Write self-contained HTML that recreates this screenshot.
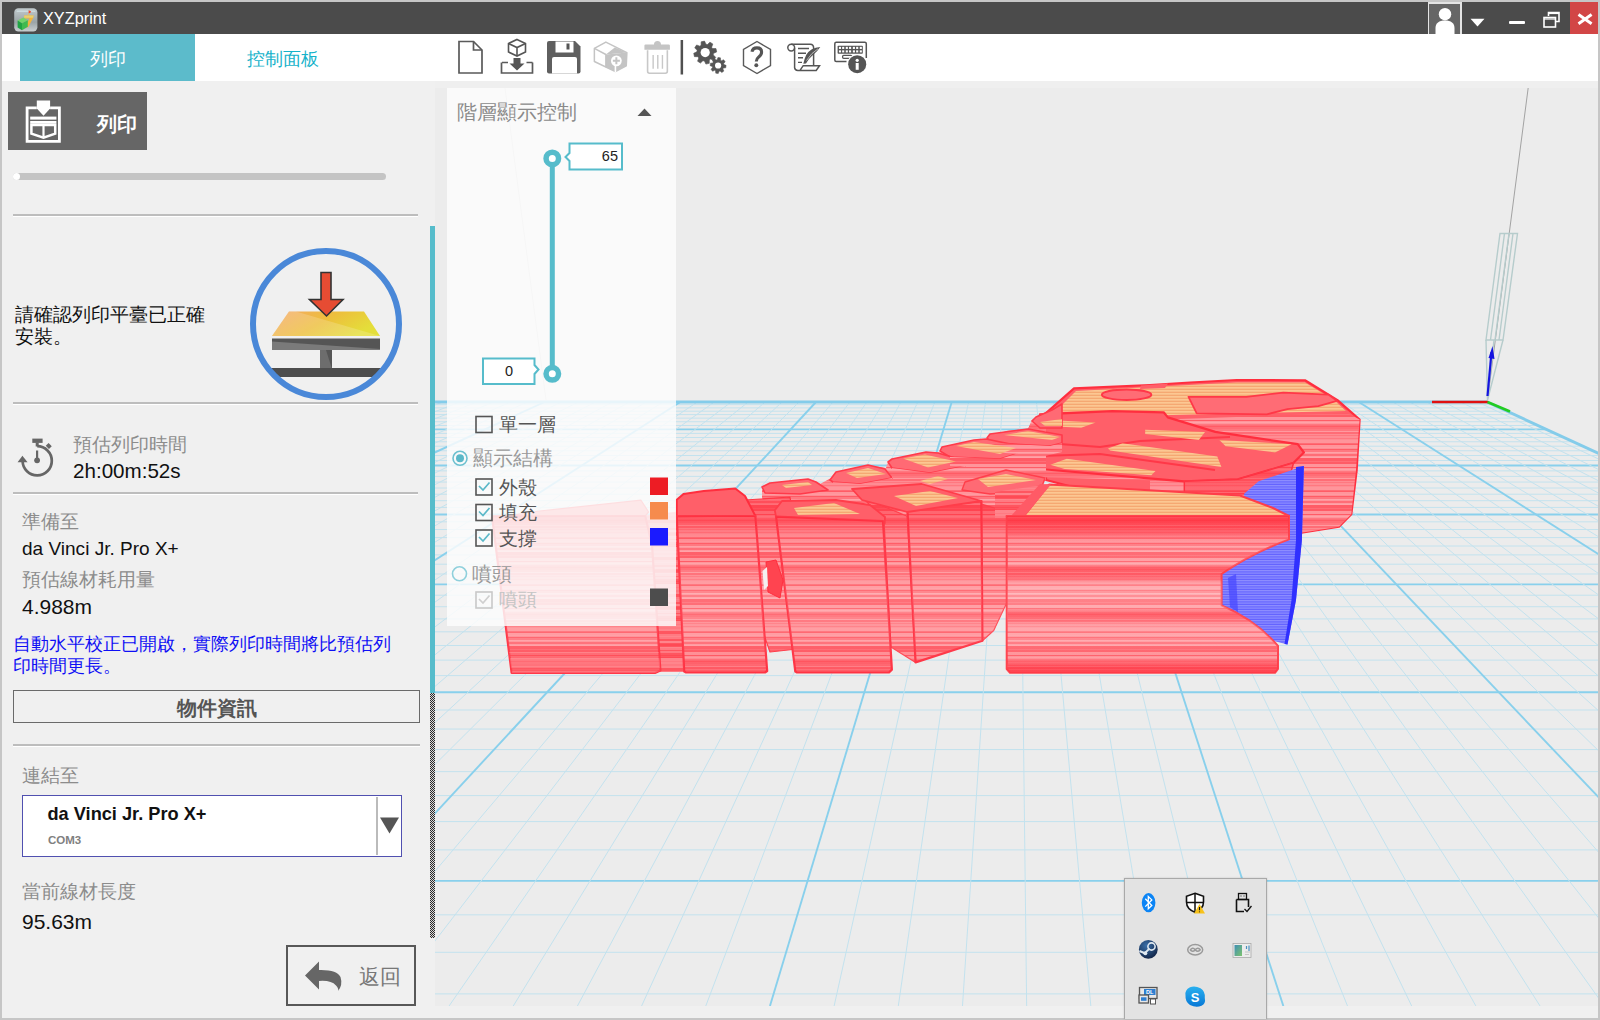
<!DOCTYPE html>
<html><head><meta charset="utf-8">
<style>
*{box-sizing:border-box;margin:0;padding:0}
html,body{width:1600px;height:1020px;overflow:hidden;background:#c6c6c6;font-family:"Liberation Sans",sans-serif}
.a{position:absolute}
#title{left:2px;top:2px;width:1596px;height:32px;background:#4b4b4b}
#toolbar{left:2px;top:34px;width:1596px;height:47px;background:#fff}
#band{left:2px;top:81px;width:1596px;height:7px;background:#efefef}
#left{left:2px;top:81px;width:433px;height:937px;background:#f0f0f0}
#scene{left:435px;top:88px;width:1163px;height:918px;background:#ececec;overflow:hidden}
#bottomstrip{left:435px;top:1006px;width:1163px;height:12px;background:#f0f0f0}
.cjk{font-family:"Liberation Sans",sans-serif}
.sep{position:absolute;height:3px;border-top:2px solid #bdbdbd;border-bottom:1px solid #fff}
.gray{color:#8a8a8a}
</style></head><body>
<div id="title" class="a">
<svg class="a" style="left:10px;top:3px" width="28" height="28" viewBox="12 5 28 28">
<defs><linearGradient id="ig" x1="0" y1="0" x2="0" y2="1"><stop offset="0" stop-color="#c3cbce"/><stop offset="0.6" stop-color="#9aa3a6"/><stop offset="1" stop-color="#c9cfd1"/></linearGradient></defs>
<rect x="14.2" y="8.2" width="23.2" height="23.3" rx="4.2" fill="url(#ig)"/>
<rect x="16.5" y="10.5" width="19" height="1.6" rx="0.8" fill="#cfe0e4" opacity="0.8"/>
<path d="M24.2 15.6 H33.6 L33.2 17.8 L28.2 27.2 H25.2 L29.6 18.4 H24.2 Z" fill="#f2b43a"/>
<path d="M24.2 15.6 H33.6 L33.2 17.8 H24.2 Z" fill="#e8d070"/>
<path d="M17.6 20.4 L23.2 17.6 L27.8 20.2 L22 23.2 Z" fill="#72d46a"/>
<path d="M17.6 20.4 L22 23.2 L22 30.2 L17.6 27.4 Z" fill="#1fa443"/>
<path d="M22 23.2 L27.8 20.2 L27.8 26.8 L22 30.2 Z" fill="#3fba4f"/>
<path d="M28.6 10.2 Q31 10.8 31.2 12 Q29.8 13.4 28.6 13.6 Z" fill="#f04a28"/>
<path d="M28.6 13.5 V15.6" stroke="#e8c060" stroke-width="1"/>
</svg>
<div class="a" style="left:41px;top:7px;font-size:16.3px;color:#fff;letter-spacing:0px">XYZprint</div>
<div class="a" style="left:1425.75px;top:0;width:34px;height:32px;background:#e4e4e4"></div>
<div class="a" style="left:1427.25px;top:2.4px;width:31px;height:29.6px;background:#666"></div>
<svg class="a" style="left:1426.5px;top:-1.5px" width="32" height="33.5" viewBox="0 0 32 33.5">
<circle cx="16" cy="13.2" r="6.2" fill="#fff"/>
<path d="M6.5 33.5 L6.5 27 C6.5 22 10 19.5 16 19.5 C22 19.5 25.5 22 25.5 27 L25.5 33.5 Z" fill="#fff"/>
</svg>
<svg class="a" style="left:1466px;top:12.5px" width="20" height="14" viewBox="0 0 20 14"><path d="M2.5 3.8 L16.5 3.8 L9.5 11.5 Z" fill="#fff"/></svg>
<div class="a" style="left:1507px;top:18.5px;width:16px;height:3px;background:#fff;border-radius:1px"></div>
<svg class="a" style="left:1537.5px;top:4.5px" width="22" height="22" viewBox="0 0 22 22">
<path d="M8.5 9 V5.5 H19 V14.5 H15.5" fill="none" stroke="#fff" stroke-width="1.6"/>
<rect x="4" y="10.5" width="11.5" height="9.5" fill="none" stroke="#fff" stroke-width="1.6"/>
<line x1="4" y1="12" x2="15.5" y2="12" stroke="#fff" stroke-width="1.2"/>
<line x1="8.5" y1="6.5" x2="19" y2="6.5" stroke="#fff" stroke-width="1.2"/>
</svg>
<div class="a" style="left:1567.5px;top:0;width:28.5px;height:32px;background:#d24646"></div>
<svg class="a" style="left:1567px;top:0" width="29" height="32" viewBox="0 0 29 32">
<path d="M9.5 12.5 L22.6 21.8 M22.6 12.5 L9.5 21.8" stroke="#fff" stroke-width="2.9" stroke-linecap="butt"/>
</svg>

</div>
<div id="toolbar" class="a">
<div class="a" style="left:18px;top:0;width:175px;height:47px;background:#5cbbcb"></div>
<div class="a" style="left:18px;top:13.5px;width:175px;text-align:center;font-size:17.6px;font-weight:300;color:#fff;line-height:22px">列印</div>
<div class="a" style="left:193px;top:13.5px;width:175px;text-align:center;font-size:17.6px;font-weight:300;color:#16b2ca;line-height:22px">控制面板</div>
<svg class="a" style="left:-2px;top:-34px" width="1600" height="81" viewBox="0 0 1600 81">
<g fill="none" stroke="#5a5a5a" stroke-width="1.7">
<!-- new file -->
<path d="M459 41.5 H473.5 L482 50 V73 H459 Z"/>
<path d="M473.5 41.5 V50 H482" />
<!-- import -->
<path d="M501.5 62.5 V73 H532.5 V62.5"/>
<path d="M508 62.5 H502 M526.5 62.5 H532.5" />
</g>
<g fill="none" stroke="#555" stroke-width="1.6">
<path d="M517 39.5 L525.5 43.5 V52 L517 56 L508.5 52 V43.5 Z"/>
<path d="M508.5 43.5 L517 47.5 L525.5 43.5 M517 47.5 V56"/>
</g>
<path d="M513.5 58 H520.5 V63.5 H524.5 L517 70.5 L509.5 63.5 H513.5 Z" fill="#555"/>
<!-- save -->
<path d="M549 41 H575 L580.5 46.5 V71.5 Q580.5 73.5 578.5 73.5 H549 Q547 73.5 547 71.5 V43 Q547 41 549 41 Z" fill="#5f5f5f"/>
<rect x="555.5" y="41.5" width="18" height="11" fill="#fff"/>
<rect x="566.5" y="43.5" width="3" height="6" fill="#555"/>
<path d="M552 73.5 V59 Q552 57 554 57 H575 Q577 57 577 59 V73.5 Z" fill="#fff"/>
<!-- add box disabled -->
<path d="M605.85 54.48 L614.77 47.47 L626.88 52.57 Z" fill="#c4c4c4"/>
<path d="M605.85 54.48 L626.88 52.57 L626.24 65.96 L615.41 71.69 L605.85 67.23 Z" fill="#c4c4c4"/>
<g fill="none" stroke="#c4c4c4" stroke-width="1.5" stroke-linejoin="round">
<path d="M594.37 48.43 L605.85 42.05 L626.88 52.57 L626.24 65.96 L615.41 71.69 L594.37 61.49 Z"/>
<path d="M594.37 48.43 L605.85 54.48 L605.85 67.23"/>
</g>
<circle cx="616.36" cy="60.86" r="5.4" fill="#fff"/>
<path d="M616.36 57.35 V64.36 M612.86 60.86 H619.87" stroke="#c4c4c4" stroke-width="2"/>
<path d="M615.41 65.32 V72.65" stroke="#fff" stroke-width="1.6"/>
<!-- trash disabled -->
<path d="M644.41 45.56 Q644.41 44.60 645.68 44.60 H653.97 Q653.97 41.10 657.47 41.10 Q660.98 41.10 660.98 44.60 H668.62 Q669.90 44.60 669.90 45.56 V49.70 H644.41 Z" fill="#c4c4c4"/>
<path d="M647.59 50.34 V71.37 Q647.59 73.28 649.50 73.28 H665.44 Q667.35 73.28 667.35 71.37 V50.34" fill="none" stroke="#c8c8c8" stroke-width="1.6"/>
<path d="M653.14 55.12 V68.82 M657.79 55.12 V68.82 M662.44 55.12 V68.82" stroke="#c8c8c8" stroke-width="1.4"/>
<!-- separator -->
<rect x="680.6" y="40" width="2.5" height="34.5" fill="#505050"/>
<!-- gears -->
<path d="M712.53 48.50 L715.97 48.55 L716.68 51.92 L713.57 53.36 L713.28 54.89 L715.67 57.35 L713.80 60.23 L710.58 59.05 L709.30 59.93 L709.25 63.37 L705.88 64.08 L704.44 60.97 L702.91 60.68 L700.45 63.07 L697.57 61.20 L698.75 57.98 L697.87 56.70 L694.43 56.65 L693.72 53.28 L696.83 51.84 L697.12 50.31 L694.73 47.85 L696.60 44.97 L699.82 46.15 L701.10 45.27 L701.15 41.83 L704.52 41.12 L705.96 44.23 L707.49 44.52 L709.95 42.13 L712.83 44.00 L711.65 47.22 Z" fill="#555" stroke="#555" stroke-width="0.6" stroke-linejoin="round"/>
<circle cx="705.2" cy="52.6" r="4.6" fill="#fff"/>
<path d="M723.91 64.50 L726.10 65.34 L725.74 67.86 L723.41 68.06 L722.92 68.90 L723.87 71.04 L721.84 72.57 L720.04 71.07 L719.10 71.31 L718.26 73.50 L715.74 73.14 L715.54 70.81 L714.70 70.32 L712.56 71.27 L711.03 69.24 L712.53 67.44 L712.29 66.50 L710.10 65.66 L710.46 63.14 L712.79 62.94 L713.28 62.10 L712.33 59.96 L714.36 58.43 L716.16 59.93 L717.10 59.69 L717.94 57.50 L720.46 57.86 L720.66 60.19 L721.50 60.68 L723.64 59.73 L725.17 61.76 L723.67 63.56 Z" fill="#555" stroke="#555" stroke-width="0.5" stroke-linejoin="round"/>
<circle cx="718.1" cy="65.5" r="3.1" fill="#fff"/>
<!-- help hexagon -->
<path d="M757 41.5 L770.5 49.5 V65.5 L757 73.5 L743.5 65.5 V49.5 Z" fill="none" stroke="#5a5a5a" stroke-width="1.4"/>
<path d="M752 51.8 Q752.6 47.9 756.9 47.9 Q761.6 47.9 761.6 52 Q761.6 54.8 758.8 56.9 Q756.4 58.8 756.3 61.5" fill="none" stroke="#555" stroke-width="3.1"/>
<circle cx="756.3" cy="65.3" r="1.95" fill="#555"/>
<!-- script -->
<g fill="none" stroke="#555" stroke-width="1.5">
<circle cx="791.2" cy="47.6" r="3.4"/>
<path d="M791.2 44.2 H810.3 Q813.6 44.4 813.6 47.8 V65.7"/>
<path d="M794.6 48 V67.6 Q794.9 70.4 797.8 70.4 H816.2 L819.5 65.7 H803.2 L800 70.4"/>
<path d="M798 48.5 H809 M798 53.2 H806 M798 57.7 H803 M798 62.4 H802" stroke-width="1.4"/>
</g>
<path d="M820.3 47 Q810.5 47.6 806.2 55 Q804.2 59.2 803.3 63.8 L806 63.5 Q808.6 58.8 812.5 55.6 Q817.6 51.2 820.3 47 Z" fill="#555"/>
<path d="M818 48.8 Q811.5 52.6 806.5 60.5" fill="none" stroke="#fff" stroke-width="0.6"/>
<!-- keyboard info -->
<path d="M846.5 61.5 H836.3 Q834.8 61.5 834.8 60 V43.7 Q834.8 42.3 836.3 42.3 H864.8 Q866.3 42.3 866.3 43.7 V58" fill="none" stroke="#555" stroke-width="1.5"/>
<rect x="837.6" y="45.8" width="25.2" height="8" rx="0.8" fill="#555"/>
<rect x="838.95" y="46.85" width="2.1" height="2.1" fill="#fff"/><rect x="838.95" y="50.35" width="2.1" height="2.1" fill="#fff"/><rect x="842.15" y="46.85" width="2.1" height="2.1" fill="#fff"/><rect x="842.15" y="50.35" width="2.1" height="2.1" fill="#fff"/><rect x="845.75" y="46.85" width="2.1" height="2.1" fill="#fff"/><rect x="845.75" y="50.35" width="2.1" height="2.1" fill="#fff"/><rect x="849.05" y="46.85" width="2.1" height="2.1" fill="#fff"/><rect x="849.05" y="50.35" width="2.1" height="2.1" fill="#fff"/><rect x="852.85" y="46.85" width="2.1" height="2.1" fill="#fff"/><rect x="852.85" y="50.35" width="2.1" height="2.1" fill="#fff"/><rect x="856.15" y="46.85" width="2.1" height="2.1" fill="#fff"/><rect x="856.15" y="50.35" width="2.1" height="2.1" fill="#fff"/><rect x="859.75" y="46.85" width="2.1" height="2.1" fill="#fff"/><rect x="859.75" y="50.35" width="2.1" height="2.1" fill="#fff"/>
<rect x="842.6" y="55.4" width="9.3" height="2.9" rx="1" fill="none" stroke="#555" stroke-width="1.3"/>
<circle cx="857.2" cy="64.2" r="10.2" fill="#fff"/>
<circle cx="857.2" cy="64.2" r="9.05" fill="#555"/>
<circle cx="857.2" cy="60.3" r="1.6" fill="#fff"/>
<rect x="855.7" y="63" width="3" height="6.8" fill="#fff"/>
</svg>

</div>
<div id="band" class="a"></div>
<div id="left" class="a">
<div class="a" style="left:-2px;top:-81px;width:1600px;height:1020px">
<!-- print button -->
<div class="a" style="left:8px;top:92px;width:139px;height:58px;background:#666"></div>
<svg class="a" style="left:8px;top:92px" width="139" height="58" viewBox="8 92 139 58">
<path d="M36.8 107.8 H27.1 V141.4 H59.4 V107.8 H50.1" fill="none" stroke="#fff" stroke-width="2.8"/>
<path d="M36.8 100.6 H50.1 V108.6 L43.5 115.7 L36.8 108.6 Z" fill="#fff"/>
<rect x="30.2" y="116.6" width="26.2" height="3" fill="#fff"/>
<rect x="30.2" y="121" width="26.2" height="2.8" fill="#fff"/>
<path d="M31.4 125 H55.2 V133.6 L43.5 137.6 L31.4 133.6 Z" fill="none" stroke="#fff" stroke-width="2.5"/>
<path d="M43.5 125 V137.5" stroke="#fff" stroke-width="2.2"/>
</svg>
<div class="a" style="left:97px;top:111.5px;font-size:19.5px;font-weight:bold;color:#fff;line-height:24px">列印</div>
<!-- progress -->
<div class="a" style="left:13px;top:173px;width:373px;height:7px;border-radius:4px;background:#c4c4c4"></div>
<div class="a" style="left:13px;top:173px;width:7px;height:7px;border-radius:4px;background:#fff"></div>
<!-- separators -->
<div class="sep" style="left:13px;top:214px;width:405px"></div>
<div class="sep" style="left:13px;top:401.5px;width:405px"></div>
<div class="sep" style="left:13px;top:491.5px;width:405px"></div>
<div class="sep" style="left:13px;top:744px;width:407px"></div>
<!-- notice -->
<div class="a" style="left:14.5px;top:304px;font-size:18.6px;color:#111;line-height:21.5px">請確認列印平臺已正確<br>安裝。</div>
<!-- platform icon -->
<svg class="a" style="left:248px;top:246px" width="158" height="158" viewBox="248 246 158 158">
<defs>
<clipPath id="cc"><circle cx="326" cy="324" r="74"/></clipPath>
<linearGradient id="pg" x1="0" y1="0" x2="1" y2="0.4"><stop offset="0" stop-color="#f5a86a"/><stop offset="0.55" stop-color="#edbf3c"/><stop offset="1" stop-color="#e4de3a"/></linearGradient>
</defs>
<g clip-path="url(#cc)">
<path d="M272 336 L289 311.5 L364 311.5 L380 336 Z" fill="url(#pg)"/>
<path d="M272 336 L289 311.5 L296 311.5 L380 336 Z" fill="#fff" opacity="0.18"/>
<path d="M272 338.5 H380 V350 H272 Z" fill="#555"/>
<path d="M272 341.5 L380 349 V350 H272 Z" fill="#7a7a7a"/>
<rect x="320" y="350" width="12" height="19" fill="#555"/>
<path d="M320 350 H326 L332 369 H320 Z" fill="#777" opacity="0.7"/>
<rect x="250" y="368" width="150" height="9" fill="#4d4d4d"/>
</g>
<circle cx="326" cy="324" r="73" fill="none" stroke="#4a88d8" stroke-width="6"/>
<path d="M321 272.5 H331 V299.5 H343 L326.5 316 L309.5 299.5 H321 Z" fill="#e64c33" stroke="#333" stroke-width="1.6" stroke-linejoin="miter"/>
</svg>
<!-- time -->
<svg class="a" style="left:14px;top:434px" width="44" height="44" viewBox="14 434 44 44">
<path d="M22.6 461 A14.6 14.6 0 1 0 37.2 446.2" fill="none" stroke="#666" stroke-width="2.7"/>
<path d="M17.6 462.3 L27.6 462.3 L22.4 455.8 Z" fill="#666"/>
<rect x="32.3" y="438.6" width="10.3" height="4.3" fill="#666"/>
<rect x="35.7" y="442.5" width="3" height="4" fill="#666"/>
<rect x="46.5" y="444" width="4.5" height="4" fill="#666" transform="rotate(45 48.8 446)"/>
<path d="M37.1 450.5 V460" stroke="#666" stroke-width="2.2"/>
<circle cx="37.1" cy="460.3" r="2.9" fill="#666"/>
</svg>
<div class="a gray" style="left:73px;top:433px;font-size:18.67px;line-height:23px;color:#8c8c8c">預估列印時間</div>
<div class="a" style="left:73px;top:457.5px;font-size:20.6px;line-height:26px;color:#111">2h:00m:52s</div>
<!-- ready -->
<div class="a" style="left:22px;top:509.5px;font-size:18.67px;line-height:23px;color:#8c8c8c">準備至</div>
<div class="a" style="left:22px;top:536.5px;font-size:19.05px;line-height:24px;color:#111">da Vinci Jr. Pro X+</div>
<div class="a" style="left:22px;top:567.5px;font-size:18.67px;line-height:23px;color:#8c8c8c">預估線材耗用量</div>
<div class="a" style="left:22px;top:595px;font-size:21px;line-height:24px;color:#111">4.988m</div>
<div class="a" style="left:13px;top:632.5px;width:410px;font-size:18.4px;line-height:22px;color:#0f0ff5">自動水平校正已開啟，實際列印時間將比預估列<br>印時間更長。</div>
<!-- object info button -->
<div class="a" style="left:13px;top:690px;width:407px;height:33px;border:1.6px solid #6a6a6a;background:#f0f0f0"></div>
<div class="a" style="left:13px;top:697px;width:407px;text-align:center;font-size:19.5px;line-height:22px;font-weight:bold;color:#555">物件資訊</div>
<!-- connect -->
<div class="a" style="left:22px;top:764px;font-size:18.67px;line-height:23px;color:#8c8c8c">連結至</div>
<div class="a" style="left:22px;top:794.5px;width:380px;height:62.5px;border:1.8px solid #5050b0;background:#fff"></div>
<div class="a" style="left:376px;top:796.5px;width:1.5px;height:58.5px;background:#bbb"></div>
<svg class="a" style="left:378px;top:814px" width="24" height="22" viewBox="0 0 24 22"><path d="M2 3.5 H21 L11.5 19.5 Z" fill="#555"/></svg>
<div class="a" style="left:47.5px;top:801.5px;font-size:18.2px;line-height:24px;font-weight:bold;color:#111">da Vinci Jr. Pro X+</div>
<div class="a" style="left:48px;top:832.5px;font-size:11.5px;line-height:14px;color:#808080;font-weight:bold">COM3</div>
<div class="a" style="left:22px;top:880px;font-size:18.67px;line-height:23px;color:#8c8c8c">當前線材長度</div>
<div class="a" style="left:22px;top:910px;font-size:21px;line-height:24px;color:#111">95.63m</div>
<!-- return -->
<div class="a" style="left:285.5px;top:945px;width:130px;height:60.5px;border:2.5px solid #585858;background:#f0f0f0"></div>
<svg class="a" style="left:300px;top:955px" width="50" height="42" viewBox="300 955 50 42">
<path d="M319 961.5 L305 975.5 L319 989.5 V981 Q331 980 336 985.5 Q339 988.5 338 991 Q343 985 340.5 977 Q337 969.5 319 970 Z" fill="#666"/>
</svg>
<div class="a" style="left:358.5px;top:964.5px;font-size:20.6px;line-height:23px;color:#777">返回</div>
<!-- scrollbar -->
<div class="a" style="left:430px;top:226px;width:5px;height:467px;background:#56bccb"></div>
<div class="a" style="left:430px;top:693px;width:5px;height:245px;background-image:repeating-conic-gradient(#2a2a2a 0 25%,#d8d8d8 0 50%);background-size:2px 2px"></div>
</div>

</div>
<div id="bottomstrip" class="a"></div>
<svg class="a" style="left:0;top:0" width="1600" height="1020" viewBox="0 0 1600 1020">
<defs>
<clipPath id="sc"><rect x="435" y="88" width="1163" height="918"/></clipPath>
</defs>
<rect x="435" y="88" width="1163" height="918" fill="#ececec"/>
<g clip-path="url(#sc)">
<line x1="435" y1="404.67" x2="1492.89" y2="404.67" stroke="#c3e2ee" stroke-width="1"/>
<line x1="435" y1="407.89" x2="1499.85" y2="407.89" stroke="#c3e2ee" stroke-width="1"/>
<line x1="435" y1="411.20" x2="1507.03" y2="411.20" stroke="#c3e2ee" stroke-width="1"/>
<line x1="435" y1="414.61" x2="1514.42" y2="414.61" stroke="#c3e2ee" stroke-width="1"/>
<line x1="435" y1="418.13" x2="1522.05" y2="418.13" stroke="#c3e2ee" stroke-width="1"/>
<line x1="435" y1="421.76" x2="1529.91" y2="421.76" stroke="#c3e2ee" stroke-width="1"/>
<line x1="435" y1="425.51" x2="1538.03" y2="425.51" stroke="#c3e2ee" stroke-width="1"/>
<line x1="435" y1="429.38" x2="1546.41" y2="429.38" stroke="#89d0ec" stroke-width="1.9"/>
<line x1="435" y1="433.38" x2="1555.07" y2="433.38" stroke="#c3e2ee" stroke-width="1"/>
<line x1="435" y1="437.51" x2="1564.02" y2="437.51" stroke="#c3e2ee" stroke-width="1"/>
<line x1="435" y1="441.78" x2="1573.28" y2="441.78" stroke="#c3e2ee" stroke-width="1"/>
<line x1="435" y1="446.20" x2="1582.86" y2="446.20" stroke="#c3e2ee" stroke-width="1"/>
<line x1="435" y1="450.78" x2="1592.78" y2="450.78" stroke="#c3e2ee" stroke-width="1"/>
<line x1="435" y1="455.53" x2="1598.00" y2="455.53" stroke="#c3e2ee" stroke-width="1"/>
<line x1="435" y1="460.45" x2="1598.00" y2="460.45" stroke="#c3e2ee" stroke-width="1"/>
<line x1="435" y1="465.55" x2="1598.00" y2="465.55" stroke="#89d0ec" stroke-width="1.9"/>
<line x1="435" y1="470.85" x2="1598.00" y2="470.85" stroke="#c3e2ee" stroke-width="1"/>
<line x1="435" y1="476.35" x2="1598.00" y2="476.35" stroke="#c3e2ee" stroke-width="1"/>
<line x1="435" y1="482.07" x2="1598.00" y2="482.07" stroke="#c3e2ee" stroke-width="1"/>
<line x1="435" y1="488.03" x2="1598.00" y2="488.03" stroke="#c3e2ee" stroke-width="1"/>
<line x1="435" y1="494.23" x2="1598.00" y2="494.23" stroke="#c3e2ee" stroke-width="1"/>
<line x1="435" y1="500.69" x2="1598.00" y2="500.69" stroke="#c3e2ee" stroke-width="1"/>
<line x1="435" y1="507.43" x2="1598.00" y2="507.43" stroke="#c3e2ee" stroke-width="1"/>
<line x1="435" y1="514.47" x2="1598.00" y2="514.47" stroke="#89d0ec" stroke-width="1.9"/>
<line x1="435" y1="521.83" x2="1598.00" y2="521.83" stroke="#c3e2ee" stroke-width="1"/>
<line x1="435" y1="529.52" x2="1598.00" y2="529.52" stroke="#c3e2ee" stroke-width="1"/>
<line x1="435" y1="537.58" x2="1598.00" y2="537.58" stroke="#c3e2ee" stroke-width="1"/>
<line x1="435" y1="546.02" x2="1598.00" y2="546.02" stroke="#c3e2ee" stroke-width="1"/>
<line x1="435" y1="554.89" x2="1598.00" y2="554.89" stroke="#c3e2ee" stroke-width="1"/>
<line x1="435" y1="564.20" x2="1598.00" y2="564.20" stroke="#c3e2ee" stroke-width="1"/>
<line x1="435" y1="574.01" x2="1598.00" y2="574.01" stroke="#c3e2ee" stroke-width="1"/>
<line x1="435" y1="584.33" x2="1598.00" y2="584.33" stroke="#89d0ec" stroke-width="1.9"/>
<line x1="435" y1="595.22" x2="1598.00" y2="595.22" stroke="#c3e2ee" stroke-width="1"/>
<line x1="435" y1="606.73" x2="1598.00" y2="606.73" stroke="#c3e2ee" stroke-width="1"/>
<line x1="435" y1="618.91" x2="1598.00" y2="618.91" stroke="#c3e2ee" stroke-width="1"/>
<line x1="435" y1="631.81" x2="1598.00" y2="631.81" stroke="#c3e2ee" stroke-width="1"/>
<line x1="435" y1="645.52" x2="1598.00" y2="645.52" stroke="#c3e2ee" stroke-width="1"/>
<line x1="435" y1="660.10" x2="1598.00" y2="660.10" stroke="#c3e2ee" stroke-width="1"/>
<line x1="435" y1="675.63" x2="1598.00" y2="675.63" stroke="#c3e2ee" stroke-width="1"/>
<line x1="435" y1="692.23" x2="1598.00" y2="692.23" stroke="#89d0ec" stroke-width="1.9"/>
<line x1="435" y1="709.99" x2="1598.00" y2="709.99" stroke="#c3e2ee" stroke-width="1"/>
<line x1="435" y1="729.05" x2="1598.00" y2="729.05" stroke="#c3e2ee" stroke-width="1"/>
<line x1="435" y1="749.55" x2="1598.00" y2="749.55" stroke="#c3e2ee" stroke-width="1"/>
<line x1="435" y1="771.67" x2="1598.00" y2="771.67" stroke="#c3e2ee" stroke-width="1"/>
<line x1="435" y1="795.61" x2="1598.00" y2="795.61" stroke="#c3e2ee" stroke-width="1"/>
<line x1="435" y1="821.59" x2="1598.00" y2="821.59" stroke="#c3e2ee" stroke-width="1"/>
<line x1="435" y1="849.89" x2="1598.00" y2="849.89" stroke="#c3e2ee" stroke-width="1"/>
<line x1="435" y1="880.84" x2="1598.00" y2="880.84" stroke="#89d0ec" stroke-width="1.9"/>
<line x1="435" y1="914.83" x2="1598.00" y2="914.83" stroke="#c3e2ee" stroke-width="1"/>
<line x1="435" y1="952.32" x2="1598.00" y2="952.32" stroke="#c3e2ee" stroke-width="1"/>
<line x1="435" y1="993.89" x2="1598.00" y2="993.89" stroke="#c3e2ee" stroke-width="1"/>
<line x1="-66.05" y1="402.0" x2="-3080.62" y2="1006.0" stroke="#c3e2ee" stroke-width="1"/>
<line x1="-49.09" y1="402.0" x2="-3016.45" y2="1006.0" stroke="#c3e2ee" stroke-width="1"/>
<line x1="-32.12" y1="402.0" x2="-2952.27" y2="1006.0" stroke="#c3e2ee" stroke-width="1"/>
<line x1="-15.16" y1="402.0" x2="-2888.09" y2="1006.0" stroke="#c3e2ee" stroke-width="1"/>
<line x1="1.80" y1="402.0" x2="-2823.92" y2="1006.0" stroke="#89d0ec" stroke-width="1.9"/>
<line x1="18.76" y1="402.0" x2="-2759.74" y2="1006.0" stroke="#c3e2ee" stroke-width="1"/>
<line x1="35.73" y1="402.0" x2="-2695.57" y2="1006.0" stroke="#c3e2ee" stroke-width="1"/>
<line x1="52.69" y1="402.0" x2="-2631.39" y2="1006.0" stroke="#c3e2ee" stroke-width="1"/>
<line x1="69.65" y1="402.0" x2="-2567.21" y2="1006.0" stroke="#c3e2ee" stroke-width="1"/>
<line x1="86.61" y1="402.0" x2="-2503.04" y2="1006.0" stroke="#c3e2ee" stroke-width="1"/>
<line x1="103.58" y1="402.0" x2="-2438.86" y2="1006.0" stroke="#c3e2ee" stroke-width="1"/>
<line x1="120.54" y1="402.0" x2="-2374.69" y2="1006.0" stroke="#c3e2ee" stroke-width="1"/>
<line x1="137.50" y1="402.0" x2="-2310.51" y2="1006.0" stroke="#89d0ec" stroke-width="1.9"/>
<line x1="154.46" y1="402.0" x2="-2246.33" y2="1006.0" stroke="#c3e2ee" stroke-width="1"/>
<line x1="171.43" y1="402.0" x2="-2182.16" y2="1006.0" stroke="#c3e2ee" stroke-width="1"/>
<line x1="188.39" y1="402.0" x2="-2117.98" y2="1006.0" stroke="#c3e2ee" stroke-width="1"/>
<line x1="205.35" y1="402.0" x2="-2053.80" y2="1006.0" stroke="#c3e2ee" stroke-width="1"/>
<line x1="222.31" y1="402.0" x2="-1989.63" y2="1006.0" stroke="#c3e2ee" stroke-width="1"/>
<line x1="239.28" y1="402.0" x2="-1925.45" y2="1006.0" stroke="#c3e2ee" stroke-width="1"/>
<line x1="256.24" y1="402.0" x2="-1861.28" y2="1006.0" stroke="#c3e2ee" stroke-width="1"/>
<line x1="273.20" y1="402.0" x2="-1797.10" y2="1006.0" stroke="#89d0ec" stroke-width="1.9"/>
<line x1="290.16" y1="402.0" x2="-1732.92" y2="1006.0" stroke="#c3e2ee" stroke-width="1"/>
<line x1="307.13" y1="402.0" x2="-1668.75" y2="1006.0" stroke="#c3e2ee" stroke-width="1"/>
<line x1="324.09" y1="402.0" x2="-1604.57" y2="1006.0" stroke="#c3e2ee" stroke-width="1"/>
<line x1="341.05" y1="402.0" x2="-1540.40" y2="1006.0" stroke="#c3e2ee" stroke-width="1"/>
<line x1="358.01" y1="402.0" x2="-1476.22" y2="1006.0" stroke="#c3e2ee" stroke-width="1"/>
<line x1="374.98" y1="402.0" x2="-1412.04" y2="1006.0" stroke="#c3e2ee" stroke-width="1"/>
<line x1="391.94" y1="402.0" x2="-1347.87" y2="1006.0" stroke="#c3e2ee" stroke-width="1"/>
<line x1="408.90" y1="402.0" x2="-1283.69" y2="1006.0" stroke="#89d0ec" stroke-width="1.9"/>
<line x1="425.86" y1="402.0" x2="-1219.52" y2="1006.0" stroke="#c3e2ee" stroke-width="1"/>
<line x1="442.83" y1="402.0" x2="-1155.34" y2="1006.0" stroke="#c3e2ee" stroke-width="1"/>
<line x1="459.79" y1="402.0" x2="-1091.16" y2="1006.0" stroke="#c3e2ee" stroke-width="1"/>
<line x1="476.75" y1="402.0" x2="-1026.99" y2="1006.0" stroke="#c3e2ee" stroke-width="1"/>
<line x1="493.71" y1="402.0" x2="-962.81" y2="1006.0" stroke="#c3e2ee" stroke-width="1"/>
<line x1="510.68" y1="402.0" x2="-898.64" y2="1006.0" stroke="#c3e2ee" stroke-width="1"/>
<line x1="527.64" y1="402.0" x2="-834.46" y2="1006.0" stroke="#c3e2ee" stroke-width="1"/>
<line x1="544.60" y1="402.0" x2="-770.28" y2="1006.0" stroke="#89d0ec" stroke-width="1.9"/>
<line x1="561.56" y1="402.0" x2="-706.11" y2="1006.0" stroke="#c3e2ee" stroke-width="1"/>
<line x1="578.53" y1="402.0" x2="-641.93" y2="1006.0" stroke="#c3e2ee" stroke-width="1"/>
<line x1="595.49" y1="402.0" x2="-577.75" y2="1006.0" stroke="#c3e2ee" stroke-width="1"/>
<line x1="612.45" y1="402.0" x2="-513.58" y2="1006.0" stroke="#c3e2ee" stroke-width="1"/>
<line x1="629.41" y1="402.0" x2="-449.40" y2="1006.0" stroke="#c3e2ee" stroke-width="1"/>
<line x1="646.38" y1="402.0" x2="-385.23" y2="1006.0" stroke="#c3e2ee" stroke-width="1"/>
<line x1="663.34" y1="402.0" x2="-321.05" y2="1006.0" stroke="#c3e2ee" stroke-width="1"/>
<line x1="680.30" y1="402.0" x2="-256.87" y2="1006.0" stroke="#89d0ec" stroke-width="1.9"/>
<line x1="697.26" y1="402.0" x2="-192.70" y2="1006.0" stroke="#c3e2ee" stroke-width="1"/>
<line x1="714.23" y1="402.0" x2="-128.52" y2="1006.0" stroke="#c3e2ee" stroke-width="1"/>
<line x1="731.19" y1="402.0" x2="-64.35" y2="1006.0" stroke="#c3e2ee" stroke-width="1"/>
<line x1="748.15" y1="402.0" x2="-0.17" y2="1006.0" stroke="#c3e2ee" stroke-width="1"/>
<line x1="765.11" y1="402.0" x2="64.01" y2="1006.0" stroke="#c3e2ee" stroke-width="1"/>
<line x1="782.08" y1="402.0" x2="128.18" y2="1006.0" stroke="#c3e2ee" stroke-width="1"/>
<line x1="799.04" y1="402.0" x2="192.36" y2="1006.0" stroke="#c3e2ee" stroke-width="1"/>
<line x1="816.00" y1="402.0" x2="256.53" y2="1006.0" stroke="#89d0ec" stroke-width="1.9"/>
<line x1="832.96" y1="402.0" x2="320.71" y2="1006.0" stroke="#c3e2ee" stroke-width="1"/>
<line x1="849.93" y1="402.0" x2="384.89" y2="1006.0" stroke="#c3e2ee" stroke-width="1"/>
<line x1="866.89" y1="402.0" x2="449.06" y2="1006.0" stroke="#c3e2ee" stroke-width="1"/>
<line x1="883.85" y1="402.0" x2="513.24" y2="1006.0" stroke="#c3e2ee" stroke-width="1"/>
<line x1="900.81" y1="402.0" x2="577.42" y2="1006.0" stroke="#c3e2ee" stroke-width="1"/>
<line x1="917.78" y1="402.0" x2="641.59" y2="1006.0" stroke="#c3e2ee" stroke-width="1"/>
<line x1="934.74" y1="402.0" x2="705.77" y2="1006.0" stroke="#c3e2ee" stroke-width="1"/>
<line x1="951.70" y1="402.0" x2="769.94" y2="1006.0" stroke="#89d0ec" stroke-width="1.9"/>
<line x1="968.66" y1="402.0" x2="834.12" y2="1006.0" stroke="#c3e2ee" stroke-width="1"/>
<line x1="985.62" y1="402.0" x2="898.30" y2="1006.0" stroke="#c3e2ee" stroke-width="1"/>
<line x1="1002.59" y1="402.0" x2="962.47" y2="1006.0" stroke="#c3e2ee" stroke-width="1"/>
<line x1="1019.55" y1="402.0" x2="1026.65" y2="1006.0" stroke="#c3e2ee" stroke-width="1"/>
<line x1="1036.51" y1="402.0" x2="1090.82" y2="1006.0" stroke="#c3e2ee" stroke-width="1"/>
<line x1="1053.48" y1="402.0" x2="1155.00" y2="1006.0" stroke="#c3e2ee" stroke-width="1"/>
<line x1="1070.44" y1="402.0" x2="1219.18" y2="1006.0" stroke="#c3e2ee" stroke-width="1"/>
<line x1="1087.40" y1="402.0" x2="1283.35" y2="1006.0" stroke="#89d0ec" stroke-width="1.9"/>
<line x1="1104.36" y1="402.0" x2="1347.53" y2="1006.0" stroke="#c3e2ee" stroke-width="1"/>
<line x1="1121.33" y1="402.0" x2="1411.70" y2="1006.0" stroke="#c3e2ee" stroke-width="1"/>
<line x1="1138.29" y1="402.0" x2="1475.88" y2="1006.0" stroke="#c3e2ee" stroke-width="1"/>
<line x1="1155.25" y1="402.0" x2="1540.06" y2="1006.0" stroke="#c3e2ee" stroke-width="1"/>
<line x1="1172.21" y1="402.0" x2="1604.23" y2="1006.0" stroke="#c3e2ee" stroke-width="1"/>
<line x1="1189.17" y1="402.0" x2="1668.41" y2="1006.0" stroke="#c3e2ee" stroke-width="1"/>
<line x1="1206.14" y1="402.0" x2="1732.58" y2="1006.0" stroke="#c3e2ee" stroke-width="1"/>
<line x1="1223.10" y1="402.0" x2="1796.76" y2="1006.0" stroke="#89d0ec" stroke-width="1.9"/>
<line x1="1240.06" y1="402.0" x2="1860.94" y2="1006.0" stroke="#c3e2ee" stroke-width="1"/>
<line x1="1257.03" y1="402.0" x2="1925.11" y2="1006.0" stroke="#c3e2ee" stroke-width="1"/>
<line x1="1273.99" y1="402.0" x2="1989.29" y2="1006.0" stroke="#c3e2ee" stroke-width="1"/>
<line x1="1290.95" y1="402.0" x2="2053.47" y2="1006.0" stroke="#c3e2ee" stroke-width="1"/>
<line x1="1307.91" y1="402.0" x2="2117.64" y2="1006.0" stroke="#c3e2ee" stroke-width="1"/>
<line x1="1324.88" y1="402.0" x2="2181.82" y2="1006.0" stroke="#c3e2ee" stroke-width="1"/>
<line x1="1341.84" y1="402.0" x2="2245.99" y2="1006.0" stroke="#c3e2ee" stroke-width="1"/>
<line x1="1358.80" y1="402.0" x2="2310.17" y2="1006.0" stroke="#89d0ec" stroke-width="1.9"/>
<line x1="1375.76" y1="402.0" x2="2374.35" y2="1006.0" stroke="#c3e2ee" stroke-width="1"/>
<line x1="1392.72" y1="402.0" x2="2438.52" y2="1006.0" stroke="#c3e2ee" stroke-width="1"/>
<line x1="1409.69" y1="402.0" x2="2502.70" y2="1006.0" stroke="#c3e2ee" stroke-width="1"/>
<line x1="1426.65" y1="402.0" x2="2566.87" y2="1006.0" stroke="#c3e2ee" stroke-width="1"/>
<line x1="1443.61" y1="402.0" x2="2631.05" y2="1006.0" stroke="#c3e2ee" stroke-width="1"/>
<line x1="1460.58" y1="402.0" x2="2695.23" y2="1006.0" stroke="#c3e2ee" stroke-width="1"/>
<line x1="1477.54" y1="402.0" x2="2759.40" y2="1006.0" stroke="#c3e2ee" stroke-width="1"/>
<line x1="435" y1="402.0" x2="1487.1" y2="402.0" stroke="#84ccea" stroke-width="3"/>
<line x1="1487.1" y1="402.0" x2="2795.58" y2="1006.0" stroke="#84ccea" stroke-width="3"/>
<!-- faint build line -->
<line x1="505" y1="88" x2="546" y2="400" stroke="#d4d4d4" stroke-width="1"/>
<defs>
<pattern id="sf" width="8" height="47" patternUnits="userSpaceOnUse"><rect y="0" width="8" height="1" fill="#ff959b"/><rect y="1" width="8" height="1" fill="#ff7880"/><rect y="2" width="8" height="1" fill="#ff6d76"/><rect y="3" width="8" height="1" fill="#ff5c66"/><rect y="4" width="8" height="2" fill="#ff6d76"/><rect y="6" width="8" height="2" fill="#ff7880"/><rect y="8" width="8" height="1" fill="#ff9aa0"/><rect y="9" width="8" height="2" fill="#ff6d76"/><rect y="11" width="8" height="1" fill="#ff8c93"/><rect y="12" width="8" height="1" fill="#ff7880"/><rect y="13" width="8" height="1" fill="#ff8c93"/><rect y="14" width="8" height="1" fill="#ff8c93"/><rect y="15" width="8" height="1" fill="#ff7880"/><rect y="16" width="8" height="1" fill="#ff8c93"/><rect y="17" width="8" height="2" fill="#ff959b"/><rect y="19" width="8" height="1" fill="#ff959b"/><rect y="20" width="8" height="1" fill="#ff6d76"/><rect y="21" width="8" height="1" fill="#ff5c66"/><rect y="22" width="8" height="2" fill="#ff959b"/><rect y="24" width="8" height="1" fill="#ff9aa0"/><rect y="25" width="8" height="1" fill="#ff8c93"/><rect y="26" width="8" height="1" fill="#ff5c66"/><rect y="27" width="8" height="2" fill="#ff7880"/><rect y="29" width="8" height="1" fill="#ffa3a8"/><rect y="30" width="8" height="1" fill="#ff959b"/><rect y="31" width="8" height="2" fill="#ff6d76"/><rect y="33" width="8" height="1" fill="#ff9aa0"/><rect y="34" width="8" height="1" fill="#ffa3a8"/><rect y="35" width="8" height="2" fill="#ff5c66"/><rect y="37" width="8" height="1" fill="#ff5c66"/><rect y="38" width="8" height="1" fill="#ff6d76"/><rect y="39" width="8" height="2" fill="#ff5c66"/><rect y="41" width="8" height="1" fill="#ff959b"/><rect y="42" width="8" height="2" fill="#ff959b"/><rect y="44" width="8" height="1" fill="#ff5c66"/><rect y="45" width="8" height="1" fill="#ff959b"/><rect y="46" width="8" height="1" fill="#ffa3a8"/></pattern>
<pattern id="sd" width="8" height="37" patternUnits="userSpaceOnUse"><rect y="0" width="8" height="2" fill="#ff858c"/><rect y="2" width="8" height="1" fill="#ff5660"/><rect y="3" width="8" height="1" fill="#ff5660"/><rect y="4" width="8" height="1" fill="#ff5660"/><rect y="5" width="8" height="2" fill="#ff7a82"/><rect y="7" width="8" height="1" fill="#ff858c"/><rect y="8" width="8" height="2" fill="#ff7a82"/><rect y="10" width="8" height="2" fill="#ff5660"/><rect y="12" width="8" height="2" fill="#ff858c"/><rect y="14" width="8" height="1" fill="#ff5660"/><rect y="15" width="8" height="2" fill="#ff4a55"/><rect y="17" width="8" height="1" fill="#ff5660"/><rect y="18" width="8" height="1" fill="#ff858c"/><rect y="19" width="8" height="1" fill="#ff7a82"/><rect y="20" width="8" height="1" fill="#ff7a82"/><rect y="21" width="8" height="1" fill="#ff5660"/><rect y="22" width="8" height="2" fill="#ff7a82"/><rect y="24" width="8" height="2" fill="#ff5660"/><rect y="26" width="8" height="1" fill="#ff4a55"/><rect y="27" width="8" height="1" fill="#ff5660"/><rect y="28" width="8" height="1" fill="#ff4a55"/><rect y="29" width="8" height="1" fill="#ff858c"/><rect y="30" width="8" height="1" fill="#ff858c"/><rect y="31" width="8" height="1" fill="#ff858c"/><rect y="32" width="8" height="1" fill="#ff7a82"/><rect y="33" width="8" height="1" fill="#ff858c"/><rect y="34" width="8" height="1" fill="#ff858c"/><rect y="35" width="8" height="1" fill="#ff7a82"/><rect y="36" width="8" height="1" fill="#ff7a82"/></pattern>
<pattern id="so" width="5" height="3" patternUnits="userSpaceOnUse"><rect width="5" height="3" fill="#fcc792"/><rect y="1.7" width="5" height="1.3" fill="#f5a872"/></pattern>
<linearGradient id="shade" gradientUnits="userSpaceOnUse" x1="0" y1="516" x2="0" y2="673"><stop offset="0" stop-color="#ff2030" stop-opacity="0.4"/><stop offset="0.1" stop-color="#ff2030" stop-opacity="0.15"/><stop offset="0.3" stop-color="#fff" stop-opacity="0"/><stop offset="0.5" stop-color="#fff" stop-opacity="0.12"/><stop offset="0.75" stop-color="#fff" stop-opacity="0.08"/><stop offset="0.92" stop-color="#ff2030" stop-opacity="0.1"/><stop offset="1" stop-color="#ff2030" stop-opacity="0.35"/></linearGradient>
<linearGradient id="shadeF" gradientUnits="userSpaceOnUse" x1="0" y1="516" x2="0" y2="673">
<stop offset="0" stop-color="#ff1a2a" stop-opacity="0.35"/>
<stop offset="0.12" stop-color="#ff1a2a" stop-opacity="0.25"/>
<stop offset="0.16" stop-color="#fff" stop-opacity="0.05"/>
<stop offset="0.3" stop-color="#fff" stop-opacity="0.1"/>
<stop offset="0.34" stop-color="#ff1a2a" stop-opacity="0.3"/>
<stop offset="0.4" stop-color="#ff1a2a" stop-opacity="0.25"/>
<stop offset="0.44" stop-color="#fff" stop-opacity="0.15"/>
<stop offset="0.58" stop-color="#fff" stop-opacity="0.12"/>
<stop offset="0.6" stop-color="#ff1a2a" stop-opacity="0.25"/>
<stop offset="0.66" stop-color="#ff1a2a" stop-opacity="0.2"/>
<stop offset="0.7" stop-color="#fff" stop-opacity="0.1"/>
<stop offset="0.92" stop-color="#fff" stop-opacity="0.05"/>
<stop offset="0.95" stop-color="#ff1a2a" stop-opacity="0.3"/>
<stop offset="1" stop-color="#ff1a2a" stop-opacity="0.35"/>
</linearGradient>
<pattern id="sb" width="6" height="2.5" patternUnits="userSpaceOnUse"><rect width="6" height="2.5" fill="#8f8fff"/><rect y="1.3" width="6" height="1.2" fill="#6262ff"/></pattern>
</defs>
<g stroke-linejoin="round">
<!-- back right block -->
<path d="M1046 413 L1074 388.4 L1150 385 L1190 382.5 L1236.7 380 L1305 380.3 L1338.3 400.8 L1359.6 419.5 L1356.7 470 L1351.3 514.3 L1339 526.7 L1299.8 532.9 L1200 520 L1046 480 Z" fill="#ff5f69" stroke="#ff2e3e" stroke-width="2.2"/>
<path d="M1150 420 L1347.2 413 L1359.6 419.5 L1356 470 L1351.3 514.3 L1339 526.7 L1299.8 532.9 L1150 505 Z" fill="url(#sf)"/>
<path d="M1054 413 L1076 391 L1160 386.5 L1236.7 382.5 L1305 382.5 L1334 400 L1346 411 L1150 415.5 L1054 415.5 Z" fill="url(#so)"/>
<path d="M1188.5 396.8 L1246.2 396.8 L1283.3 392.7 L1328.7 394.7 L1337 400.9 L1318.4 406.1 L1287.4 409.2 L1266.8 414.3 L1196.7 413.3 Z" fill="#ff6c75" stroke="#ff3848" stroke-width="1.8"/>
<ellipse cx="1126.6" cy="394.7" rx="24.7" ry="5.2" fill="#ff6c75" stroke="#ff3848" stroke-width="2"/>
<path d="M1141 385.5 L1168 383.4 L1165 388 L1140 389 Z" fill="#ff5f69"/>
<!-- mid layer -->
<path d="M986 439 L1006 431 L1028 429 L1032 420 L1046 412 L1112 411.2 L1163.7 412.3 L1167.8 417.4 L1215.3 431.9 L1297.7 444.2 L1303.9 452.5 L1293.6 462.8 L1237.9 479.3 L1235.9 493.7 L1184.3 493.7 L1184.3 481.3 L960 475 L960 445 Z" fill="url(#sf)"/>
<path d="M1040 414.3 L1112.2 411.2 L1163.7 412.3 L1167.8 417.4 L1215.3 431.9 L1297.7 444.2 L1303.9 452.5 L1293.6 462.8 L1237.9 479.3 L1184.3 481.3 L1040 469 Z" fill="#ff5f69" stroke="#ff2e3e" stroke-width="2.2"/>
<path d="M1184.3 481.3 L1237.9 479.3 L1293.6 462.8 L1290 476 L1244 494 L1184.3 493.7 Z" fill="url(#sf)" stroke="#ff3848" stroke-width="1.5"/>
<path d="M1184.3 481.3 L1237.9 479.3 L1293.6 462.8 L1290 476 L1244 494 L1184.3 493.7 Z" fill="url(#shade)"/>
<g fill="none" stroke="#ff3848" stroke-width="2">
<path d="M1046 443 L1100 447 L1140 441 L1230 437"/>
<path d="M1040 456 L1100 454 L1215 470"/>
</g>
<g fill="url(#so)">
<path d="M1040 419.5 L1095.7 422.6 L1081.2 427.7 L1040 425.7 Z"/>
<path d="M1004 434.5 L1061.6 436 L1057.5 440.8 L1008 440 Z"/>
<path d="M1145.2 429.8 L1205 431.9 L1198.8 440.1 L1145.2 433.9 Z"/>
<path d="M1219.4 440.1 L1291.5 444.2 L1275 452.5 L1225.6 446.3 Z"/>
<path d="M1108 448.4 L1122.5 443.2 L1217.3 456.6 L1221.4 466.9 L1110.1 450.4 Z"/>
<path d="M1050.3 464.8 L1066.8 458.7 L1155.5 471 L1151.3 475.2 L1064.7 469 Z"/>
</g>
<!-- staircase base -->
<path d="M762 520 L762 490 L770 484 L808 479 L820 484 L831 478 L840 471 L868 465 L886 468 L887 464 L898 458 L926 453 L940 452 L944 447 L974 441 L988 440 L1006 431 L1028 429 L1032 420 L1046 412 L1046 480 L1000 520 Z" fill="url(#sf)"/>
<g stroke="#ff3a4a" stroke-width="1.6" fill="#ff6a74">
<path d="M1032 421 L1036 417 L1052 410 L1062 404 L1062 428 L1040 428 Z"/>
<path d="M987 438 L990 434 L1028 429 L1062 435 L1062 443 L1050 446 L992 443 Z"/>
<path d="M940 451 L942 447 L974 440 L986 439 L1020 446 L1022 452 L1000 459 L950 457 Z"/>
<path d="M888 462 L892 459 L926 452 L938 453 L962 460 L965 466 L930 473 L892 468 Z"/>
<path d="M830 480 L836 472 L868 465 L885 469 L892 478 L860 484 L833 482 Z"/>
<path d="M762 487 L770 483 L808 479 L816 482 L828 490 L800 494 L765 493 Z"/>
</g>
<g fill="url(#sf)">
<path d="M992 443 L1050 446 L1062 443 L1062 452 L1045 456 L992 452 Z"/>
<path d="M950 457 L1000 459 L1022 452 L1022 462 L1000 468 L950 466 Z"/>
<path d="M892 468 L930 473 L965 466 L965 476 L930 483 L892 478 Z"/>
<path d="M833 482 L860 484 L892 478 L892 488 L860 494 L833 492 Z"/>
</g>
<g fill="url(#so)">
<path d="M782 485 L808 482 L812 485 L786 488 Z"/>
<path d="M846 473 L868 468 L886 474 L857 478 Z"/>
<path d="M903 458.5 L925 454.5 L956 461.5 L928 467.5 Z"/>
<path d="M956 446 L974 442 L1016 448 L1000 454 Z"/>
<path d="M1004 435 L1028 431 L1060 437 L1052 440 Z"/>
<path d="M1040 422 L1062 419 L1062 426 L1045 426 Z"/>
</g>
<path d="M965 482 L1006 470 L1045 478 L1040 492 L990 494 L962 490 Z" fill="#ff6a74" stroke="#ff3f4b" stroke-width="1.4"/>
<path d="M978 479 L1006 474 L1036 480 L988 487 Z" fill="url(#so)"/>
<path d="M920 481 L938 476 L948 479 L930 484 Z" fill="url(#so)"/>
<!-- connector block4 -> front block -->
<path d="M981.4 504 L1010 512 L1008 600 L993.7 630.5 L982.4 640.8 Z" fill="url(#sf)" stroke="#ff4a55" stroke-width="1.2"/>
<path d="M981.4 504 L1010 512 L1008 600 L993.7 630.5 L982.4 640.8 Z" fill="url(#shade)"/>
<!-- block 4 -->
<path d="M862 497 L907.3 516.3 L915.6 662.4 L890.9 647 L884 520 Z" fill="url(#sf)" stroke="#ff4a55" stroke-width="1.2"/>
<path d="M862 497 L907.3 516.3 L915.6 662.4 L890.9 647 L884 520 Z" fill="url(#shade)"/>
<path d="M907.3 509 L981.4 501 L982.4 640.8 L915.6 662.4 Z" fill="url(#sf)" stroke="#ff3848" stroke-width="2.2"/>
<path d="M907.3 509 L981.4 501 L982.4 640.8 L915.6 662.4 Z" fill="url(#shade)"/>
<path d="M852 489 L921.7 484 L981.4 501 L907.3 512 L862 500 Z" fill="#ff5f69" stroke="#ff3d4a" stroke-width="1.8"/>
<path d="M894 496 L930 491 L958 498 L916 506 Z" fill="url(#so)"/>
<!-- connector 2-3 -->
<path d="M745 500 L790 497 L800 560 L797 649 L770 652 L752 600 Z" fill="url(#sf)" stroke="#ff3d4a" stroke-width="1.2"/>
<path d="M745 500 L790 497 L800 560 L797 649 L770 652 L752 600 Z" fill="url(#shade)"/>
<path d="M766 562 L776 560 L783 580 L780 598 L768 592 Z" fill="#ff4450" stroke="#ff2e3e" stroke-width="1"/>
<path d="M762.5 571 L767 567 L768 586 L764 590 Z" fill="#f4f0f0"/>
<!-- block 3 -->
<path d="M774.8 510.3 L782 501 L836 500 L870 505 L885 517 L884.7 523.5 L776 516.6 Z" fill="#ff5f69" stroke="#ff3d4a" stroke-width="1.8"/>
<path d="M794 508 L834 503 L860 514 L798 515 Z" fill="url(#so)"/>
<path d="M776 516.6 L883 521 L891.9 669.6 L889 672.5 L797 672.5 L795.3 671.6 Z" fill="url(#sf)" stroke="#ff3848" stroke-width="2.2"/>
<path d="M776 516.6 L883 521 L891.9 669.6 L889 672.5 L797 672.5 L795.3 671.6 Z" fill="url(#shade)"/>
<!-- block L side gap -->
<path d="M640 516 L690 510 L690 672 L650 672 Z" fill="url(#sd)"/>
<!-- block 2 -->
<path d="M676.75 499.75 L683.5 494.1 L703.75 491.1 L735.3 488.5 L745 496 L755.4 516 L676.7 516.4 Z" fill="#ff5f69" stroke="#ff2e3e" stroke-width="2"/>
<path d="M676.7 516.4 L755.4 516 L767.2 671 L765 672.5 L686 672.5 L684.2 671.6 Z" fill="url(#sf)" stroke="#ff3848" stroke-width="2.2"/>
<path d="M676.7 516.4 L755.4 516 L767.2 671 L765 672.5 L686 672.5 L684.2 671.6 Z" fill="url(#shade)"/>
<!-- block L -->
<path d="M491 518.5 L539.6 511 L641 500.2 L648.6 512 L645 516.4 L492 516.4 Z" fill="#ff8087" stroke="#ff4a55" stroke-width="1.2"/>
<path d="M492 516.4 L645.3 516 L652 545 L660.4 670.6 L655 673 L512 673 L511.6 672.8 Z" fill="url(#sf)" stroke="#ff3848" stroke-width="2.2"/>
<path d="M492 516.4 L645.3 516 L652 545 L660.4 670.6 L655 673 L512 673 L511.6 672.8 Z" fill="url(#shade)"/>
<path d="M509 652 L659 652 L660.4 670.6 L655 673 L512 673 Z" fill="url(#sd)" opacity="0.6"/>
<!-- blue supports -->
<path d="M1244.1 493.7 L1258.6 481.3 L1303.9 465.9 L1301.9 540 L1296 600 L1287.5 644.6 L1270 640 L1215 600 L1215 570 L1273 508 L1244 500 Z" fill="url(#sb)"/>
<path d="M1228 578 L1236 574 L1238 612 L1230 607 Z" fill="#4646ff" opacity="0.7"/>
<path d="M1296 467 L1303.9 465.9 L1301.9 540 L1296 600 L1287.5 644.6 L1284.5 644 L1291.5 600 L1296 540 Z" fill="#3030ff"/>
<!-- big front block -->
<path d="M995 492 L1049 484 L1024 518 L995 518 Z" fill="url(#sd)"/>
<path d="M1006.7 516 L1024 516 L1049 484.5 L1240 495.5 L1273 508 L1289 516 Z" fill="url(#so)" stroke="#ff3d4a" stroke-width="2"/>
<path d="M1010 517 L1040 484 L1051 484.5 L1024 517 Z" fill="#ff5a66"/>
<path d="M1006.7 516 L1289 516 L1289 539.4 Q1252 553 1221.6 574 L1221.6 605.3 Q1256 620 1278 646 L1278 669 L1275 672.8 L1010 672.8 L1006.7 669 Z" fill="url(#sf)" stroke="#ff4550" stroke-width="2"/>
<path d="M1006.7 516 L1289 516 L1289 539.4 Q1252 553 1221.6 574 L1221.6 605.3 Q1256 620 1278 646 L1278 669 L1275 672.8 L1010 672.8 L1006.7 669 Z" fill="url(#shade)"/>
<path d="M1008 517 L1288 517 L1288 539.4 Q1252 553 1221.6 574 L1221.6 605.3 Q1256 620 1277 646 L1277 669 L1275 672 L1010 672 L1008 669 Z" fill="url(#shadeF)"/>
</g>
<!-- axis tool -->
<g>
<line x1="1528.3" y1="87" x2="1487.5" y2="400" stroke="#9a9a9a" stroke-width="0.9"/>
<g fill="none" stroke="#b6cccc" stroke-width="1.4">
<path d="M1500 233.5 H1517.5 L1503 340 H1486 Z"/>
<path d="M1504.5 233.5 L1490.5 340 M1509 233.5 L1495 340 M1513 233.5 L1499 340"/>
<path d="M1486 340 L1487.5 400 L1503 340 M1494 340 L1487.5 400"/>
</g>
<path d="M1487.5 396 L1491.5 352" stroke="#1515e0" stroke-width="2.2"/>
<path d="M1488.5 358 L1492.5 346 L1494.5 359 Z" fill="#1515e0"/>
<line x1="1432" y1="402" x2="1488" y2="402" stroke="#e01010" stroke-width="2.6"/>
<line x1="1487.5" y1="402" x2="1510" y2="411.5" stroke="#22cc22" stroke-width="2.6"/>
</g>

</g>
</svg>
<div class="a" style="left:447px;top:88px;width:229px;height:537.5px;background:rgba(252,252,252,0.83)"></div>
<div class="a" style="left:457px;top:100px;font-size:19.7px;line-height:24px;color:#8a8a8a">階層顯示控制</div>
<svg class="a" style="left:447px;top:88px" width="229" height="538" viewBox="447 88 229 538">
<path d="M637.5 116 L644.5 108.5 L651.5 116 Z" fill="#555"/>
<line x1="552.3" y1="158" x2="552.3" y2="374" stroke="#56bccb" stroke-width="5"/>
<circle cx="552.3" cy="158.4" r="6.25" fill="#fff" stroke="#56bccb" stroke-width="5.5"/>
<circle cx="552.3" cy="373.8" r="6.25" fill="#fff" stroke="#56bccb" stroke-width="5.5"/>
<path d="M569.5 143.5 H622 V169.5 H569.5 V161 L565.5 157 L569.5 153 Z" fill="#fff" stroke="#56bccb" stroke-width="2"/>
<path d="M483 358.5 H534.5 V365 L538.5 369.5 L534.5 374 V384 H483 Z" fill="#fff" stroke="#56bccb" stroke-width="2"/>
<!-- checkboxes -->
<g fill="none" stroke="#555" stroke-width="1.6">
<rect x="476" y="416.5" width="16" height="16"/>
<rect x="476" y="479" width="16" height="16"/>
<rect x="476" y="504.5" width="16" height="16"/>
<rect x="476" y="530" width="16" height="16"/>
</g>
<g fill="none" stroke="#5bb8c8" stroke-width="1.7">
<path d="M479 486 L483 490 L489.5 482.5"/>
<path d="M479 511.5 L483 515.5 L489.5 508"/>
<path d="M479 537 L483 541 L489.5 533.5"/>
</g>
<rect x="476" y="592" width="16" height="16" fill="none" stroke="#c8c8c8" stroke-width="1.6"/>
<path d="M479 599 L483 603 L489.5 595.5" fill="none" stroke="#cfcfcf" stroke-width="1.7"/>
<circle cx="460" cy="458.3" r="7" fill="none" stroke="#6cc0cf" stroke-width="1.6"/>
<circle cx="460" cy="458.3" r="4" fill="#5bb8c8"/>
<circle cx="459.5" cy="573.8" r="7" fill="none" stroke="#8fd0dc" stroke-width="1.6"/>
<rect x="650" y="477.5" width="18" height="17.5" fill="#ed1c24"/>
<rect x="650" y="502" width="18" height="17.5" fill="#f68b4d"/>
<rect x="650" y="528" width="18" height="17.5" fill="#1a1aff"/>
<rect x="650" y="588.5" width="18" height="17.5" fill="#4d4d4d"/>
</svg>
<div class="a" style="left:592px;top:146px;width:26px;text-align:right;font-size:14.5px;line-height:20px;color:#222">65</div>
<div class="a" style="left:483px;top:361px;width:52px;text-align:center;font-size:14.5px;line-height:20px;color:#222">0</div>
<div class="a" style="left:498.5px;top:413px;font-size:18.67px;line-height:23px;color:#555">單一層</div>
<div class="a" style="left:472.5px;top:446px;font-size:19.7px;line-height:24px;color:#999">顯示結構</div>
<div class="a" style="left:498.5px;top:476px;font-size:18.67px;line-height:23px;color:#555">外殼</div>
<div class="a" style="left:498.5px;top:501px;font-size:18.67px;line-height:23px;color:#555">填充</div>
<div class="a" style="left:498.5px;top:527px;font-size:18.67px;line-height:23px;color:#555">支撐</div>
<div class="a" style="left:471.5px;top:562px;font-size:19.7px;line-height:24px;color:#999">噴頭</div>
<div class="a" style="left:498.5px;top:588px;font-size:18.67px;line-height:23px;color:#c4c4c4">噴頭</div>

<div class="a" style="left:1123.5px;top:878px;width:143px;height:141px;background:#e3e3e3;border:1px solid #a9a9a9;border-bottom:none;box-shadow:0 0 2px rgba(0,0,0,0.15)"></div>
<svg class="a" style="left:1124px;top:879px" width="142" height="140" viewBox="1124 879 142 140">
<!-- bluetooth -->
<ellipse cx="1148.6" cy="902.7" rx="6.8" ry="9.6" fill="#0b84f5"/>
<path d="M1145.3 898.8 L1151.8 905.5 L1148.3 908.8 V896.6 L1151.8 899.9 L1145.3 906.6" fill="none" stroke="#fff" stroke-width="1.3"/>
<!-- shield -->
<path d="M1195 893.3 L1203.5 896.3 V902 Q1203.5 909 1195 912.3 Q1186.5 909 1186.5 902 V896.3 Z" fill="#fff" stroke="#111" stroke-width="1.6"/>
<path d="M1195 893.5 V912 M1186.8 902.5 H1203.2" stroke="#111" stroke-width="1.5"/>
<path d="M1199.5 904 L1205 913.5 H1194 Z" fill="#f7c21b"/>
<path d="M1199.5 907 V910.3 M1199.5 911.5 V912.3" stroke="#111" stroke-width="1.1"/>
<!-- usb -->
<rect x="1238.5" y="893.5" width="8" height="6" fill="none" stroke="#111" stroke-width="1.3"/>
<path d="M1240.5 896 H1241.5 M1243.5 896 H1244.5" stroke="#111" stroke-width="1"/>
<path d="M1236.5 899.5 H1248.5 V907 M1236.5 899.5 V911.5 H1244" fill="none" stroke="#111" stroke-width="1.6"/>
<path d="M1244.5 909 L1247 911.5 L1251.5 906" fill="none" stroke="#111" stroke-width="1.3"/>
<!-- steam -->
<defs><radialGradient id="stg" cx="0.4" cy="0.3" r="0.8"><stop offset="0" stop-color="#3a6fa8"/><stop offset="1" stop-color="#0e1d3d"/></radialGradient></defs>
<circle cx="1148.3" cy="949.4" r="9.4" fill="url(#stg)"/>
<circle cx="1151.5" cy="946.5" r="3.6" fill="none" stroke="#dfe8f0" stroke-width="1.6"/>
<path d="M1139.5 951 L1145.5 953.5" stroke="#dfe8f0" stroke-width="2.2"/>
<circle cx="1145.3" cy="953.3" r="2" fill="#dfe8f0"/>
<path d="M1145.5 952.5 L1149.5 948.5" stroke="#dfe8f0" stroke-width="1.8"/>
<!-- creative cloud -->
<g fill="none" stroke="#9a9a9a" stroke-width="1.5">
<ellipse cx="1195.2" cy="949.7" rx="7.5" ry="5.2"/>
<path d="M1190 950.5 Q1192.5 946.5 1195.2 949.7 Q1198 953 1200.5 949.5 M1190 949.5 Q1192.5 953 1195.2 949.7 Q1198 946.5 1200.5 950"/>
</g>
<!-- monitor app -->
<rect x="1233" y="943.5" width="18" height="14" fill="#ececec" stroke="#aaa" stroke-width="0.8"/>
<defs><linearGradient id="mg" x1="0" y1="0" x2="1" y2="1"><stop offset="0" stop-color="#3e8fb4"/><stop offset="1" stop-color="#7dc36e"/></linearGradient></defs>
<rect x="1234.5" y="945" width="7.5" height="11" fill="url(#mg)"/>
<path d="M1246.5 946 V949 M1249 945.5 V951" stroke="#4a90c0" stroke-width="1.2"/>
<path d="M1245 952 H1250 M1245 954.5 H1249" stroke="#bbb" stroke-width="0.8"/>
<!-- DL -->
<rect x="1139.5" y="987.5" width="17.5" height="11" fill="#e8e8e8" stroke="#555" stroke-width="1.3"/>
<rect x="1144" y="989" width="11.5" height="6" fill="#2e7ed0"/>
<text x="1149.7" y="994.3" font-size="5.5" fill="#fff" font-weight="bold" text-anchor="middle" font-family="Liberation Sans">DL</text>
<rect x="1139" y="995" width="9.5" height="8" fill="#e8e8e8" stroke="#555" stroke-width="1.3"/>
<rect x="1141" y="997.3" width="5.5" height="3.5" fill="#2e7ed0"/>
<rect x="1150.5" y="999" width="5" height="5" fill="#fff" stroke="#555" stroke-width="1"/>
<!-- skype -->
<defs><linearGradient id="skg" x1="0" y1="0" x2="0" y2="1"><stop offset="0" stop-color="#2ab0ef"/><stop offset="1" stop-color="#0778d6"/></linearGradient></defs>
<path d="M1190 987.3 Q1195 985.5 1200.5 988.3 Q1205.5 991.5 1204.8 998 Q1206 1003.5 1201.5 1005.8 Q1196 1008 1190 1005 Q1185 1001.5 1185.5 995.5 Q1184.5 990 1190 987.3 Z" fill="url(#skg)"/>
<text x="1195.2" y="1001.5" font-size="13" fill="#fff" font-weight="bold" text-anchor="middle" font-family="Liberation Sans">S</text>
</svg>

</body></html>
